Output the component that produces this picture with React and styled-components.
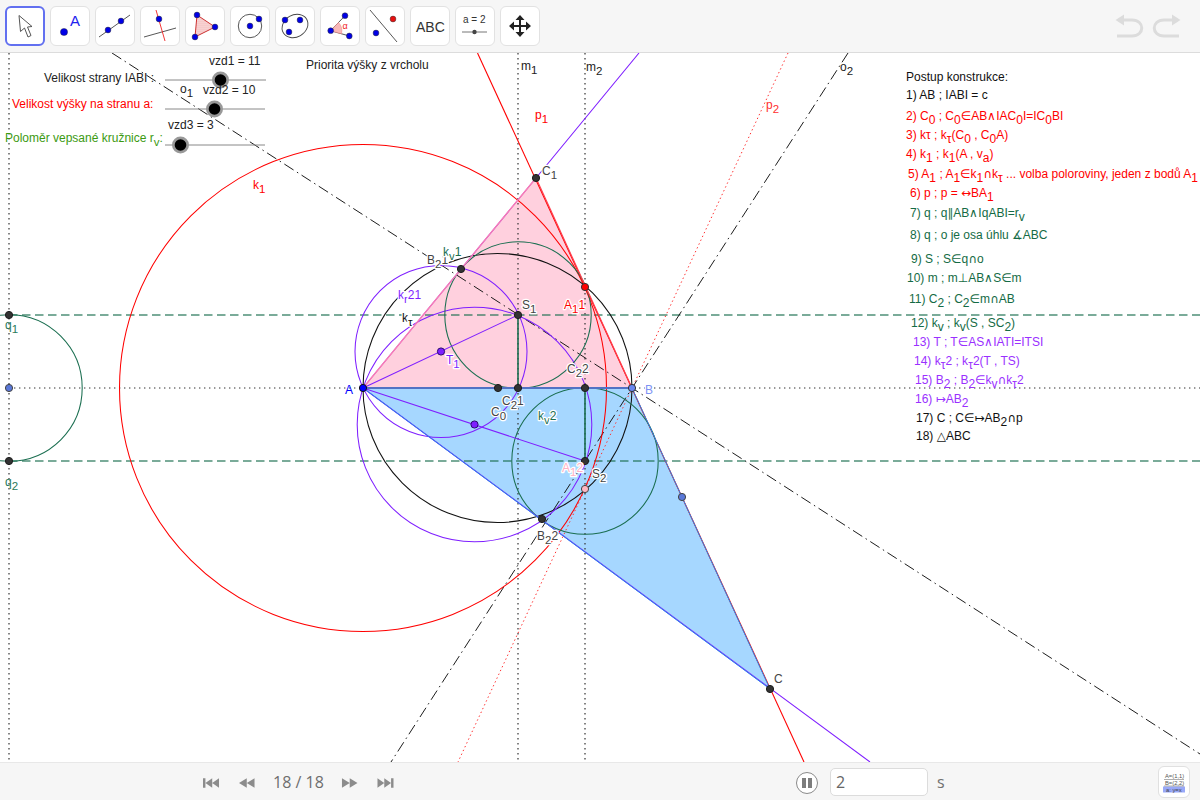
import React from "react";
import styled, { createGlobalStyle } from "styled-components";

const Global = createGlobalStyle`
  html, body { margin: 0; padding: 0; height: 100%; background: #fff; overflow: hidden; }
  #root { height: 100%; }
`;

const Page = styled.div`
  width: 1200px; height: 800px; display: flex; flex-direction: column;
  font-family: "Liberation Sans", Arial, sans-serif; background: #fff;
`;
const Toolbar = styled.header`
  height: 53px; box-sizing: border-box; flex: none; display: flex; align-items: flex-start;
  justify-content: space-between; padding: 6px 19px 0 5px; background: #f6f6f6;
  border-bottom: 1px solid #dcdcdc;
`;
const Tools = styled.div`display: flex; gap: 5px;`;
const ToolButton = styled.button`
  width: 40px; height: 40px; padding: 0; box-sizing: border-box; display: flex;
  align-items: center; justify-content: center; background: #fff; border-radius: 6px;
  border: ${p => (p.$active ? "2px solid #6270f0" : "1px solid #e2e2e2")};
  & svg { width: 40px; height: 40px; flex: none; }
`;
const History = styled.div`display: flex; gap: 6px; padding-top: 8px;`;
const Canvas = styled.main`flex: 1; position: relative; overflow: hidden; background: #fff;`;
const Board = styled.svg`display: block; width: 1200px; height: 709px;`;
const Steps = styled.ol`
  position: absolute; left: 900px; top: 15px; margin: 0; padding: 0; list-style: none;
  font-size: 12px; white-space: nowrap;
`;
const Step = styled.li`
  height: ${p => p.$h}px; line-height: 18px; padding-left: ${p => p.$x}px; color: ${p => p.$c};
`;
const Sub = styled.sub`font-size: 12px; line-height: 0; vertical-align: -4px;`;
const Sym = styled.span`font-family: "DejaVu Sans", sans-serif; font-size: 12px;`;
const Label = styled.text`
  font-family: "Liberation Sans", Arial, sans-serif; font-size: ${p => p.$s || 12}px;
  fill: ${p => p.$c || "#222"};
  ${p => p.$halo ? "paint-order: stroke; stroke: #fff; stroke-width: 2.5px; stroke-linejoin: round;" : ""}
`;
const LabelSub = styled.tspan`font-size: 11.5px;`;
const Player = styled.footer`
  height: 38px; box-sizing: border-box; flex: none; display: grid;
  grid-template-columns: 203px 196px 397px auto 1fr auto; align-items: center;
  background: #f6f6f6; border-top: 1px solid #e8e8e8; padding-right: 10px; color: #707070;
`;
const StepNav = styled.nav`
  grid-column: 2; display: flex; align-items: center; gap: 19.5px;
  & svg { width: 16.5px; height: 12px; fill: #8c8c8c; display: block; margin-top: 2px; flex: none; }
`;
const Counter = styled.span`
  font-family: "Open Sans", "Noto Sans", sans-serif; font-size: 16px; color: #6e6e6e; margin: 0 -2px; white-space: nowrap;
`;
const Timer = styled.div`grid-column: 4; display: flex; align-items: center;`;
const Pause = styled.span`
  width: 22px; height: 22px; box-sizing: border-box; border-radius: 50%; border: 1.5px solid #8a8a8a;
  background: #fff; display: flex; align-items: center; justify-content: center; gap: 2px; margin: 3px 12px 0 0;
  &::before, &::after { content: ""; width: 4px; height: 10px; background: #7d7d7d; }
`;
const Speed = styled.input`
  width: 98px; height: 28px; box-sizing: border-box; border: 1px solid #dcdcdc; border-radius: 5px;
  background: #fff; padding: 0 5px; font: 16px "Open Sans", "Noto Sans", sans-serif; color: #666; outline: none;
`;
const Unit = styled.span`font: 16px "Open Sans", "Noto Sans", sans-serif; color: #707070; margin-left: 9px;`;
const AlgebraToggle = styled.button`
  grid-column: 6; width: 32px; height: 32px; padding: 0; margin-top: 1px; box-sizing: border-box; background: #fff;
  border: 1px solid #e0e0e0; border-radius: 6px; display: flex; align-items: center; justify-content: center;
  & svg { width: 24px; height: 24px; flex: none; }
`;

const B = "#0000e6";
const Dot = ({ x, y, c = B }) => <circle cx={x} cy={y} r="2.9" fill={c} stroke="#333" strokeWidth=".5" />;
const icons = [
  <svg viewBox="0 0 40 40"><path d="M14 9.5 L15.5 25.5 L19.5 22 L23 31 L26 29.5 L22.5 21 L27 20.5 Z" fill="#fff" stroke="#555" strokeWidth="1" /></svg>,
  <svg viewBox="0 0 40 40"><circle cx="14" cy="26" r="3.6" fill={B} stroke="#222" strokeWidth=".4" /><Label x="20" y="20" $s={15} $c="#2222ee">A</Label></svg>,
  <svg viewBox="0 0 40 40"><path d="M4 31 L35 9" stroke="#444" strokeWidth=".9" /><Dot x="13" y="24" /><Dot x="26" y="15" /></svg>,
  <svg viewBox="0 0 40 40"><path d="M4 31 L36 22" stroke="#444" strokeWidth=".9" /><path d="M16 4 L25 35" stroke="#f02020" strokeWidth=".9" /><Dot x="19" y="13" /></svg>,
  <svg viewBox="0 0 40 40"><defs><pattern id="hatch" width="2" height="2" patternUnits="userSpaceOnUse"><rect width="2" height="2" fill="#fbe0e0" /><circle cx="1" cy="1" r=".6" fill="#e89090" /></pattern></defs><path d="M12 9 L30 21 L10 31 Z" fill="url(#hatch)" stroke="#cc3030" strokeWidth="1" /><Dot x="12" y="9" /><Dot x="30" y="21" /><Dot x="10" y="31" /></svg>,
  <svg viewBox="0 0 40 40"><circle cx="20" cy="20" r="11.7" fill="none" stroke="#444" strokeWidth=".9" /><Dot x="20" y="20" /><Dot x="29" y="13" /></svg>,
  <svg viewBox="0 0 40 40"><ellipse cx="20" cy="20" rx="13.5" ry="11" transform="rotate(-30 20 20)" fill="none" stroke="#444" strokeWidth=".9" /><Dot x="10" y="14" /><Dot x="25" y="14" /><Dot x="14" y="26" /></svg>,
  <svg viewBox="0 0 40 40"><path d="M10.7 24.7 L25 9.7 M10.7 24.7 L29.3 30" stroke="#444" strokeWidth=".9" fill="none" /><path d="M10.7 24.7 L18.5 16.5 Q23 21 21.5 27.8 Z" fill="#f8b8b8" stroke="#f08080" strokeWidth=".5" /><Label x="22.5" y="22.5" $s={9} $c="#f02020">α</Label><Dot x="25" y="9.7" /><Dot x="10.7" y="24.7" /><Dot x="29.3" y="30" /></svg>,
  <svg viewBox="0 0 40 40"><path d="M5 4 L32 36" stroke="#444" strokeWidth=".9" /><Dot x="28" y="13" c="#e81010" /><Dot x="11" y="27" /></svg>,
  <svg viewBox="0 0 40 40"><Label x="6" y="25.5" $s={14} $c="#333">ABC</Label></svg>,
  <svg viewBox="0 0 40 40"><Label x="8" y="17" $s={10} $c="#333">a = 2</Label><path d="M7 26 H32" stroke="#777" strokeWidth="1" /><circle cx="19.5" cy="26" r="2.2" fill="#444" /></svg>,
  <svg viewBox="0 0 40 40"><path d="M20 9 L24.5 14 H21 V19 H26 V15.5 L31 20 L26 24.5 V21 H21 V26 H24.5 L20 31 L15.5 26 H19 V21 H14 V24.5 L9 20 L14 15.5 V19 H19 V14 H15.5 Z" fill="#222" /></svg>,
];

const Pt = ({ x, y, c = "#333", r = 3.6, s = "#1c1c1c" }) => (
  <circle cx={x} cy={y} r={r} fill={c} stroke={s} strokeWidth="1" />
);
const L = ({ x, y, c, halo, children, sub, tail, s }) => (
  <Label x={x} y={y} $c={c} $halo={halo} $s={s}>
    {children}
    {sub != null && <LabelSub dy="4">{sub}</LabelSub>}
    {tail != null && <tspan dy="-4">{tail}</tspan>}
  </Label>
);

const C1 = "#ff0000", PUR = "#7f1fff", GRN = "#1a6e50";

const Geometry = () => (
  <Board viewBox="0 53 1200 709">
    <polygon points="363,388 536,178 632,388" fill="#ffd0de" />
    <polygon points="363,388 770,689 632,388" fill="#a6d7ff" />

    <path d="M9 53 V762 M518 53 V762 M585 53 V762 M9 388 H1200" stroke="#333" strokeWidth="1.2" strokeDasharray="1.4 3.6" fill="none" />
    <path d="M9 315 H1200 M9 461 H1200" stroke={GRN} strokeOpacity=".58" strokeWidth="2" strokeDasharray="8.5 4.5" />

    <path d="M788 53 L458 762" stroke="#ff3030" strokeWidth="1" strokeDasharray="1.4 2.8" />
    <path d="M477.5 53 L804 762" stroke={C1} strokeWidth="1.1" />
    <path d="M112 53 L1200 754 M848 53 L391 762" stroke="#111" strokeWidth=".95" strokeDasharray="11 4 1.5 4" />

    <g fill="none" strokeWidth="1.05">
      <circle cx="363" cy="388" r="243.5" stroke={C1} />
      <circle cx="497.5" cy="388" r="134.5" stroke="#111" />
      <circle cx="441" cy="351.5" r="86" stroke={PUR} />
      <circle cx="474.5" cy="424.5" r="117.3" stroke={PUR} />
      <circle cx="518" cy="315" r="73.2" stroke={GRN} />
      <circle cx="585" cy="461" r="73.2" stroke={GRN} />
      <circle cx="9" cy="388" r="73.2" stroke={GRN} />
      <path d="M363 388 L639 53 M363 388 L870 762 M363 388 L518 315 M363 388 L585 461" stroke={PUR} />
      <path d="M518 315 V388 M585 461 V388" stroke={GRN} strokeWidth="1.6" />
      <path d="M363 388 L536 178" stroke="#ff80b0" strokeWidth="1.2" />
      <path d="M536 178 L632 388" stroke="#ff4050" strokeWidth="1.2" />
      <path d="M363 388 L770 689 L632 388" stroke="#2a86ea" strokeWidth="1" />
      <path d="M363 388 H632" stroke="#5272c4" strokeWidth="2.2" />
    </g>

    <g>
      <path d="M165 80 H266 M165 109 H265 M165 145 H265" stroke="#888" strokeWidth="1" />
      <circle cx="220.5" cy="80" r="8.5" fill="#999" /><circle cx="220.5" cy="80" r="5.8" fill="#000" />
      <circle cx="214.5" cy="109" r="8.5" fill="#999" /><circle cx="214.5" cy="109" r="5.8" fill="#000" />
      <circle cx="180.5" cy="145" r="8.5" fill="#999" /><circle cx="180.5" cy="145" r="5.8" fill="#000" />
    </g>

    <Pt x={536} y={178} />
    <Pt x={461} y={269} />
    <Pt x={542} y={519} />
    <Pt x={518} y={315} />
    <Pt x={585} y={461} />
    <Pt x={498} y={388} />
    <Pt x={518} y={388} />
    <Pt x={585} y={388} />
    <Pt x={770} y={689} />
    <Pt x={9} y={315} />
    <Pt x={9} y={461} />
    <Pt x={441} y={351.5} c="#7f1fff" s="#2a0a70" />
    <Pt x={474.5} y={424.5} c="#7f1fff" s="#2a0a70" />
    <Pt x={585} y={287} c="#ff0000" s="#333" />
    <Pt x={585} y={489} c="#ffb6c1" s="#444" />
    <Pt x={363} y={388} c="#0000ff" s="#111" />
    <Pt x={632} y={388} c="#6a86f0" s="#333" />
    <Pt x={9} y={388} c="#5a78d8" s="#444" />
    <Pt x={682} y={497} c="#5a78d8" s="#444" />

    <L x={44} y={82}>Velikost strany IABI :</L>
    <L x={209} y={65}>vzd1 = 11</L>
    <L x={180} y={93} sub="1">o</L>
    <L x={203} y={94}>vzd2 = 10</L>
    <L x={12} y={108} c="#ff0000">Velikost výšky na stranu a:</L>
    <L x={168} y={129}>vzd3 = 3</L>
    <L x={5} y={142} c="#3c9a12" sub="v" tail=":">Poloměr vepsané kružnice r</L>
    <L x={306} y={69}>Priorita výšky z vrcholu</L>
    <L x={521} y={70} sub="1">m</L>
    <L x={586} y={71} sub="2">m</L>
    <L x={840} y={71} sub="2">o</L>
    <L x={766} y={109} c="#ff3030" sub="2">p</L>
    <L x={535} y={119} c="#ff0000" sub="1">p</L>
    <L x={253} y={189} c="#ff0000" sub="1">k</L>
    <L x={542} y={175} c="#444" sub="1" halo>C</L>
    <L x={427} y={264} c="#444" sub="2" tail="1" halo>B</L>
    <L x={443} y={256} c={GRN} sub="v" tail="1" halo>k</L>
    <L x={398} y={299} c={PUR} sub="r" tail="21" halo>k</L>
    <L x={402} y={322} c="#111" sub="τ" halo>k</L>
    <L x={522} y={309} c="#444" sub="1" halo>S</L>
    <L x={564} y={309} c="#ff0000" sub="1" tail="1" halo>A</L>
    <L x={446} y={364} c={PUR} sub="1" halo>T</L>
    <L x={5} y={329} c="#2a7a5a" sub="1">q</L>
    <L x={5} y={486} c="#2a7a5a" sub="2">q</L>
    <L x={345} y={394} c="#0000ff">A</L>
    <L x={645} y={394} c="#7c92f4" halo>B</L>
    <L x={567} y={373} c="#444" sub="2" tail="2" halo>C</L>
    <L x={502} y={405} c="#444" sub="2" tail="1" halo>C</L>
    <L x={491} y={416} c="#444" sub="0" halo>C</L>
    <L x={538} y={420} c={GRN} sub="v" tail="2" halo>k</L>
    <L x={562} y={472} c="#ffb0c4" sub="1" tail="2" halo>A</L>
    <L x={592} y={478} c="#444" sub="2" halo>S</L>
    <L x={537} y={540} c="#444" sub="2" tail="2" halo>B</L>
    <L x={774} y={683} c="#444">C</L>
  </Board>
);

const R = "#ff0000", G = "#146b45", P = "#9a30ff", K = "#111";

const Construction = () => (
  <Steps>
    <Step $x={6} $h={18} $c={K}>Postup konstrukce:</Step>
    <Step $x={6} $h={21} $c={K}>1) AB ; IABI = c</Step>
    <Step $x={6} $h={19} $c={R}>2) C<Sub>0</Sub> ; C<Sub>0</Sub><Sym>∈</Sym>AB∧IAC<Sub>0</Sub>I=IC<Sub>0</Sub>BI</Step>
    <Step $x={6} $h={19} $c={R}>3) kτ ; k<Sub>τ</Sub>(C<Sub>0</Sub> , C<Sub>0</Sub>A)</Step>
    <Step $x={6} $h={20} $c={R}>4) k<Sub>1</Sub> ; k<Sub>1</Sub>(A , v<Sub>a</Sub>)</Step>
    <Step $x={8} $h={19} $c={R}>5) A<Sub>1</Sub> ; A<Sub>1</Sub><Sym>∈</Sym>k<Sub>1</Sub><Sym>∩</Sym>k<Sub>τ</Sub> ... volba poloroviny, jeden z bodů A<Sub>1</Sub></Step>
    <Step $x={10} $h={20} $c={R}>6) p ; p = <Sym>↔</Sym>BA<Sub>1</Sub></Step>
    <Step $x={10} $h={22} $c={G}>7) q ; q<Sym>∥</Sym>AB∧IqABI=r<Sub>v</Sub></Step>
    <Step $x={10} $h={24} $c={G}>8) q ; o je osa úhlu <Sym>∡</Sym>ABC</Step>
    <Step $x={11} $h={19} $c={G}>9) S ; S<Sym>∈</Sym>q<Sym>∩</Sym>o</Step>
    <Step $x={7} $h={21} $c={G}>10) m ; m<Sym>⊥</Sym>AB∧S<Sym>∈</Sym>m</Step>
    <Step $x={9} $h={24} $c={G}>11) C<Sub>2</Sub> ; C<Sub>2</Sub><Sym>∈</Sym>m<Sym>∩</Sym>AB</Step>
    <Step $x={11} $h={19} $c={G}>12) k<Sub>v</Sub> ; k<Sub>v</Sub>(S , SC<Sub>2</Sub>)</Step>
    <Step $x={13} $h={19} $c={P}>13) T ; T<Sym>∈</Sym>AS∧IATI=ITSI</Step>
    <Step $x={14} $h={19} $c={P}>14) k<Sub>τ</Sub>2 ; k<Sub>τ</Sub>2(T , TS)</Step>
    <Step $x={15} $h={19} $c={P}>15) B<Sub>2</Sub> ; B<Sub>2</Sub><Sym>∈</Sym>k<Sub>v</Sub><Sym>∩</Sym>k<Sub>τ</Sub>2</Step>
    <Step $x={15} $h={19} $c={P}>16) <Sym>↦</Sym>AB<Sub>2</Sub></Step>
    <Step $x={16} $h={18} $c={K}>17) C ; C<Sym>∈↦</Sym>AB<Sub>2</Sub><Sym>∩</Sym>p</Step>
    <Step $x={16} $h={18} $c={K}>18) <Sym>△</Sym>ABC</Step>
  </Steps>
);

const Nav = ({ d }) => <svg viewBox="0 0 17 12"><path d={d} /></svg>;

export default function App() {
  return (
    <Page>
      <Global />
      <Toolbar>
        <Tools>
          {icons.map((ic, i) => <ToolButton key={i} $active={i === 0}>{ic}</ToolButton>)}
        </Tools>
        <History>
          <svg width="30" height="24" viewBox="0 0 30 24" fill="none" stroke="#dcdcdc" strokeWidth="3"><path d="M5 6 H17 C30 6 30 22 17 22 H2" /><path d="M0.5 6 L9 0.5 V11.5 Z" fill="#dcdcdc" stroke="none" /></svg>
          <svg width="30" height="24" viewBox="0 0 30 24" fill="none" stroke="#dcdcdc" strokeWidth="3"><path d="M25 6 H13 C0 6 0 22 13 22 H28" /><path d="M29.5 6 L21 0.5 V11.5 Z" fill="#dcdcdc" stroke="none" /></svg>
        </History>
      </Toolbar>
      <Canvas>
        <Geometry />
        <Construction />
      </Canvas>
      <Player>
        <StepNav>
          <Nav d="M0 1 H2.5 V11 H0 Z M2.5 6 L9.5 1 V11 Z M9.5 6 L16.5 1 V11 Z" />
          <Nav d="M0 6 L8 1 V11 Z M8 6 L16 1 V11 Z" />
          <Counter>18 / 18</Counter>
          <Nav d="M1 1 L9 6 L1 11 Z M9 1 L17 6 L9 11 Z" />
          <Nav d="M0.5 1 L7.5 6 L0.5 11 Z M7.5 1 L14.5 6 L7.5 11 Z M14.5 1 H17 V11 H14.5 Z" />
        </StepNav>
        <Timer>
          <Pause />
          <Speed defaultValue="2" />
          <Unit>s</Unit>
        </Timer>
        <AlgebraToggle>
          <svg viewBox="0 0 24 24">
            <rect x="1" y="16.5" width="22" height="6" fill="#98a8f8" />
            <path d="M2 9.5 H22 M2 16 H22" stroke="#777" strokeWidth=".6" />
            <Label x="3" y="8" $s={5.8} $c="#555">A=(1,1)</Label>
            <Label x="3" y="15" $s={5.8} $c="#555">B=(2,2)</Label>
            <Label x="4" y="21.5" $s={5.8} $c="#444">a: y=x</Label>
          </svg>
        </AlgebraToggle>
      </Player>
    </Page>
  );
}
